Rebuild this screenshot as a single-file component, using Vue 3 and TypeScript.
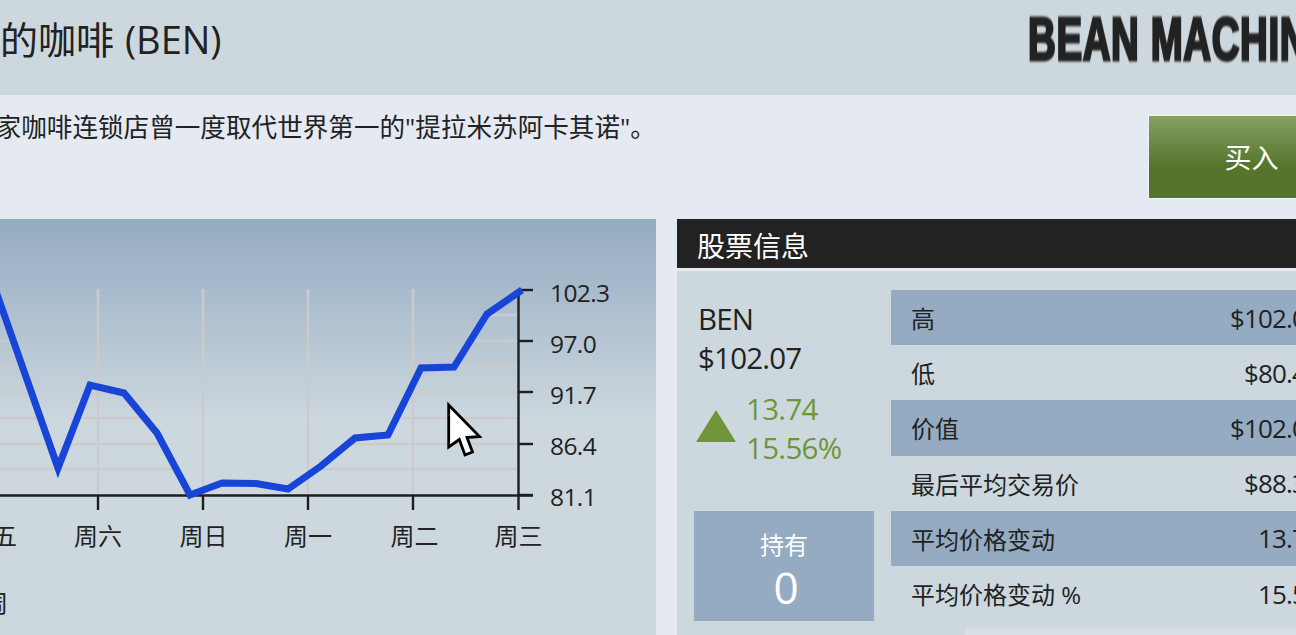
<script setup lang="ts">
interface Row { label: string; value: string }
const rows: Row[] = [
  { label: '高', value: '$102.07' },
  { label: '低', value: '$80.41' },
  { label: '价值', value: '$102.07' },
  { label: '最后平均交易价', value: '$88.33' },
  { label: '平均价格变动', value: '13.74' },
  { label: '平均价格变动 %', value: '15.56' },
]
const curve: [number, number][] = [
  [-8, 280], [25, 374], [58, 468], [90, 385], [124, 393], [157, 433], [190, 495],
  [222, 483], [256, 483.5], [288, 489], [321, 466], [355, 438], [388, 435],
  [421, 368], [454, 367], [487, 314], [522, 290],
]
const curvePts = curve.map((p) => p.join(',')).join(' ')
const areaPts = `${curvePts} 522,495 -8,495`
const vGrid = [98, 203, 308, 413]
const hGrid = [315, 341, 367, 393, 418, 444, 469]
const xLabels = [
  { x: -7, t: '周五' }, { x: 98, t: '周六' }, { x: 203.5, t: '周日' },
  { x: 308, t: '周一' }, { x: 414.5, t: '周二' }, { x: 518.5, t: '周三' },
]
const yLabels = [
  { y: 290, b: 301.5, t: '102.3' }, { y: 341, b: 353, t: '97.0' }, { y: 392, b: 404, t: '91.7' },
  { y: 444, b: 455, t: '86.4' }, { y: 495, b: 506, t: '81.1' },
]
</script>

<template>
  <div class="viewport">
    <div class="canvas">
      <header class="head">
        <h1 class="title">机的咖啡 <span class="latin">(BEN)</span></h1>
        <div class="logo"><span class="logo-text">BEAN MACHINE</span></div>
      </header>

      <section class="intro">
        <p class="desc">这家咖啡连锁店曾一度取代世界第一的"提拉米苏阿卡其诺"。</p>
        <button class="buy">买入</button>
      </section>

      <section class="columns">
        <div class="chart">
          <svg class="chart-svg" width="756" height="416" viewBox="-100 219 756 416">
            <defs>
              <clipPath id="under"><polygon :points="areaPts" /></clipPath>
            </defs>
            <g clip-path="url(#under)">
              <line v-for="y in hGrid" :key="y" x1="-100" x2="518" :y1="y" :y2="y" class="grid" />
            </g>
            <line v-for="x in vGrid" :key="x" :x1="x" :x2="x" y1="289" y2="495" class="grid" />
            <line x1="-100" x2="533" y1="495.5" y2="495.5" class="axis" />
            <line x1="518.5" x2="518.5" y1="290" y2="510" class="axis" />
            <line v-for="x in vGrid" :key="'t' + x" :x1="x" :x2="x" y1="495" y2="510" class="axis" />
            <line v-for="l in yLabels" :key="'y' + l.y" x1="518" x2="533" :y1="l.y" :y2="l.y" class="axis" />
            <polyline :points="curvePts" class="curve" />
            <text v-for="l in xLabels" :key="l.t" :x="l.x" y="545" text-anchor="middle" class="lbl">{{ l.t }}</text>
            <text v-for="l in yLabels" :key="l.t" x="550" :y="l.b" class="num">{{ l.t }}</text>
            <text x="-88" y="612" class="lbl">过去一周</text>
            <polygon
              points="448.7,405 448.7,447 459.3,439.5 465,455 472.5,452 467,437.5 479.5,436.5"
              class="cursor"
            />
          </svg>
        </div>

        <div class="info">
          <h2 class="info-head">股票信息</h2>
          <div class="info-body">
            <div class="summary">
              <div class="quote">BEN<br />$102.07</div>
              <div class="change">
                <svg class="tri" width="40" height="32" viewBox="0 0 40 32"><polygon points="20,0 40,32 0,32" /></svg>
                <div class="delta">13.74<br />15.56%</div>
              </div>
              <div class="held">
                <div class="held-label">持有</div>
                <div class="held-value">0</div>
              </div>
            </div>
            <div class="table">
              <div v-for="(r, i) in rows" :key="r.label" class="row" :class="{ alt: i % 2 === 0 }">
                <span>{{ r.label }}</span>
                <span class="val">{{ r.value }}</span>
              </div>
              <div class="strip"></div>
            </div>
          </div>
        </div>
      </section>
    </div>
  </div>
</template>

<style>
html, body { margin: 0; background: #e4e9f2; }
</style>

<style scoped>
.viewport {
  width: 1296px;
  height: 635px;
  overflow: hidden;
  background: #e4e9f2;
  font-family: "Open Sans", "Noto Sans CJK SC", sans-serif;
  color: #222;
}
.canvas { width: 1470px; height: 635px; margin-left: -100px; display: flex; flex-direction: column; }
.head { height: 95px; flex: none; background: #cdd8de; display: flex; align-items: center; }
.title { margin: 0 0 0 62px; font-size: 38px; line-height: 78px; font-weight: 400; white-space: nowrap; align-self: flex-start; }
.latin { font-size: 38px; margin-left: 1px; }
.logo { margin-left: auto; width: 342px; height: 95px; overflow: hidden; }
.logo-text {
  display: inline-block;
  font-family: "Liberation Sans Narrow", "Liberation Sans", sans-serif;
  font-weight: 700;
  font-size: 62px;
  line-height: 78px;
  letter-spacing: 1px;
  color: #222;
  white-space: nowrap;
  -webkit-text-stroke: 3px #222;
  transform: scaleX(0.62);
  transform-origin: left center;
  filter: blur(0.9px);
}
.intro { height: 124px; flex: none; display: flex; justify-content: space-between; padding: 0 15px 0 70px; box-sizing: border-box; }
.desc { margin: 15px 0 0; font-size: 25.6px; line-height: 36px; white-space: nowrap; }
.buy {
  width: 207px;
  height: 84px;
  margin-top: 20px;
  box-sizing: border-box;
  border: 1px solid #f0f3f6;
  background: linear-gradient(#86a063 0%, #55752b 62%, #55752b 100%);
  color: #fff;
  font-family: inherit;
  font-size: 27px;
  padding: 0 0 2px;
}
.columns { flex: 1; display: flex; gap: 21px; min-height: 0; }
.chart { width: 756px; flex: none; background: linear-gradient(#94abc2 0px, #cdd8de 205px, #cdd8de 100%); }
.chart-svg { display: block; }
.grid { stroke: #cbcbcb; stroke-width: 2.4; }
.axis { stroke: #1e1e1e; stroke-width: 2.4; }
.curve { fill: none; stroke: #1745d8; stroke-width: 7; stroke-linejoin: miter; }
.lbl { font-size: 24px; fill: #222; font-family: "Open Sans", "Noto Sans CJK SC", sans-serif; }
.num { font-size: 24.5px; letter-spacing: -0.6px; fill: #222; font-family: "Open Sans", sans-serif; }
.cursor { fill: #fff; stroke: #000; stroke-width: 2.8; stroke-linejoin: miter; }
.info { flex: 1; display: flex; flex-direction: column; min-width: 0; }
.info-head {
  margin: 0;
  height: 49px;
  flex: none;
  background: #222;
  color: #fff;
  font-size: 28px;
  font-weight: 400;
  line-height: 55px;
  padding-left: 20px;
  border-bottom: 3px solid #e4e9f2;
  box-sizing: content-box;
  overflow: hidden;
}
.info-body { flex: 1; background: #cdd8de; display: flex; padding-top: 19px; min-height: 0; }
.summary { width: 197px; margin-left: 17px; flex: none; }
.quote { font-size: 29.5px; letter-spacing: -0.8px; line-height: 39px; margin: 9px 0 0 4px; }
.change { display: flex; align-items: center; gap: 10px; margin: 12px 0 0 2px; }
.tri { fill: #6f9636; display: block; margin-top: -5px; }
.delta { font-size: 29.5px; letter-spacing: -0.7px; line-height: 39px; color: #6f9636; }
.held {
  width: 180px;
  height: 110px;
  margin-top: 44px;
  background: #94abc2;
  color: #fff;
  text-align: center;
  overflow: hidden;
}
.held-label { font-size: 24px; line-height: 34px; margin-top: 17px; }
.held-value { font-size: 44px; line-height: 50px; padding-left: 4px; }
.table { flex: 1; min-width: 0; }
.row {
  height: 55.2px;
  display: flex;
  justify-content: space-between;
  align-items: center;
  padding: 0 50px 0 20px;
  font-size: 24px;
}
.row.alt { background: #94abc2; }
.val { font-size: 26px; letter-spacing: -0.85px; }
.strip { height: 14px; margin: 1px 0 0 74px; background: linear-gradient(#cdd8de 20%, #dbe2e9 100%); }
</style>
